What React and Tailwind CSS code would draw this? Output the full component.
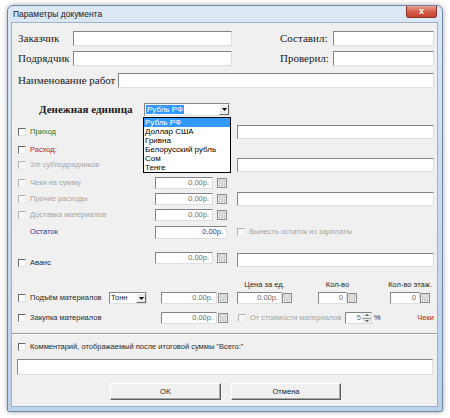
import React from "react";

const sans = "font-['Liberation_Sans',Arial,sans-serif]";
const serif = "font-['Liberation_Serif','Times_New_Roman',serif]";

function Field({ className = "", children }) {
  return (
    <div
      className={`bg-white border border-t-[#858585] border-l-[#858585] border-b-[#dedede] border-r-[#dedede] flex items-center justify-end pr-[3px] text-[7.5px] leading-none ${className}`}
    >
      {children}
    </div>
  );
}

function Calc() {
  return (
    <svg width="10" height="10" viewBox="0 0 10 10" className="shrink-0">
      <rect x="0.5" y="0.5" width="9" height="9" fill="#f2f2f2" stroke="#8c8c8c" />
      <rect x="2" y="2" width="6" height="2" fill="#ffffff" stroke="#9a9a9a" strokeWidth="0.6" />
      <path d="M2 6h1.2M4.4 6h1.2M6.8 6h1.2M2 7.8h1.2M4.4 7.8h1.2M6.8 7.8h1.2" stroke="#8c8c8c" strokeWidth="0.9" />
    </svg>
  );
}

function Check({ disabled }) {
  return disabled ? (
    <span className="block w-[8px] h-[8px] shrink-0 bg-[#f7f7f7] border border-t-[#b4b4b4] border-l-[#b4b4b4] border-b-[#ececec] border-r-[#ececec]" />
  ) : (
    <span className="block w-[8px] h-[8px] shrink-0 bg-white border border-t-[#6a6a6a] border-l-[#6a6a6a] border-b-[#e2e2e2] border-r-[#e2e2e2]" />
  );
}

function DropBtn() {
  return (
    <div className="w-[10px] h-full shrink-0 bg-[#ececec] border border-t-white border-l-white border-b-[#6a6a6a] border-r-[#6a6a6a] flex items-center justify-center">
      <svg width="5" height="3" viewBox="0 0 5 3">
        <path d="M0 0h5L2.5 3z" fill="#000" />
      </svg>
    </div>
  );
}

function Num({ w = "w-[58px]", h = "h-[12px]", gap = "gap-[4px]", text = "0,00р.", textClass = "text-[#6b6b6b]" }) {
  return (
    <div className={`flex items-center ${gap}`}>
      <Field className={`${w} ${h} ${textClass}`}>{text}</Field>
      <Calc />
    </div>
  );
}

function Left({ label, color = "text-[#2a2a2a]", disabled, w = "w-[143px]", noCheck }) {
  return (
    <div className={`${w} shrink-0 pl-[6px] flex items-center gap-[4px]`}>
      {noCheck ? <span className="block w-[8px] h-[8px]" /> : <Check disabled={disabled} />}
      <span className={`text-[7.5px] leading-none whitespace-nowrap ${color}`}>{label}</span>
    </div>
  );
}

export default function App() {
  return (
    <div className={`w-[450px] h-[418px] bg-white pt-[5px] pl-[7px] ${sans}`}>
      <div className="w-[436px] h-[407px] rounded-t-[6px] rounded-b-[2px] border border-[#6f88a8] bg-gradient-to-b from-[#dce8f6] via-[#c9dbf0] to-[#bcd1ea] flex flex-col px-[4px] pb-[5px] shadow-[0_0_5px_rgba(0,0,0,0.35)]">
        <div className="h-[17px] flex items-start justify-between">
          <span className="pl-[1px] pt-[4px] text-[8.5px] leading-none text-[#1a1a1a]">Параметры документа</span>
          <div className="mr-[1px] w-[31px] h-[12px] rounded-b-[3px] border border-[#8d3226] border-t-0 bg-gradient-to-b from-[#e9a192] via-[#d4604b] to-[#c2412c] flex items-center justify-center">
            <span className="text-white text-[9px] font-bold leading-none">x</span>
          </div>
        </div>

        <div className="relative w-[425px] h-[383px] bg-[#f0f0f0] outline outline-1 outline-[#9fb2cb] flex flex-col">
          <div className="mt-[8px] h-[15px] flex items-center pl-[6px]">
            <span className={`w-[55px] text-[11px] leading-none text-[#1a1a1a] ${serif}`}>Заказчик</span>
            <Field className="w-[159px] h-[15px]" />
            <span className={`ml-[48px] w-[53px] text-[11px] leading-none text-[#1a1a1a] ${serif}`}>Составил:</span>
            <Field className="w-[101px] h-[15px]" />
          </div>
          <div className="mt-[5px] h-[15px] flex items-center pl-[6px]">
            <span className={`w-[55px] text-[11px] leading-none text-[#1a1a1a] ${serif}`}>Подрядчик</span>
            <Field className="w-[159px] h-[15px]" />
            <span className={`ml-[48px] w-[53px] text-[11px] leading-none text-[#1a1a1a] ${serif}`}>Проверил:</span>
            <Field className="w-[101px] h-[15px]" />
          </div>
          <div className="mt-[7px] h-[15px] flex items-center pl-[6px]">
            <span className={`w-[100px] text-[11px] leading-none whitespace-nowrap text-[#1a1a1a] ${serif}`}>Наименование работ</span>
            <Field className="w-[316px] h-[15px]" />
          </div>
          <div className="mt-[15px] h-[13px] flex items-center pl-[27px]">
            <span className={`w-[105px] text-[11px] font-bold leading-none whitespace-nowrap text-[#1a1a1a] ${serif}`}>Денежная единица</span>
            <div className="w-[86px] h-[13px] bg-white border border-t-[#858585] border-l-[#858585] border-b-[#dedede] border-r-[#dedede] flex items-stretch">
              <div className="flex-1 flex items-center pl-[1px]">
                <span className="bg-[#3399ff] text-white text-[8px] leading-[9px] px-[1px]">Рубль РФ</span>
              </div>
              <DropBtn />
            </div>
          </div>

          <div className="mt-[8px] h-[16px] flex items-center">
            <Left label="Приход" color="text-[#1f7a1f]" />
            <div className="w-[72px] shrink-0" />
            <Field className="ml-[10px] w-[197px] h-[14px]" />
          </div>
          <div className="mt-[2px] h-[16px] flex items-center">
            <Left label="Расход:" color="text-[#c02424]" />
          </div>
          <div className="h-[14px] flex items-center">
            <Left label="З/п субподрядчиков" color="text-[#a6a6a6]" disabled />
            <div className="w-[72px] shrink-0" />
            <Field className="ml-[10px] w-[197px] h-[14px]" />
          </div>
          <div className="mt-[4px] h-[14px] flex items-center">
            <Left label="Чеки на сумму" color="text-[#a6a6a6]" disabled />
            <Num />
          </div>
          <div className="mt-[2px] h-[14px] flex items-center">
            <Left label="Прочие расходы" color="text-[#a6a6a6]" disabled />
            <Num />
            <Field className="ml-[10px] w-[197px] h-[14px]" />
          </div>
          <div className="mt-[2px] h-[14px] flex items-center">
            <Left label="Доставка материалов" color="text-[#a6a6a6]" disabled />
            <Num />
          </div>
          <div className="mt-[3px] h-[14px] flex items-center">
            <Left label="Остаток" color="text-[#2b3a9c]" noCheck />
            <Field className="w-[72px] h-[13px] text-[#2b3a9c]">0,00р.</Field>
            <div className="ml-[10px] flex items-center gap-[4px]">
              <Check disabled />
              <span className="text-[7.5px] leading-none text-[#a6a6a6]">Вынесть остаток из зарплаты</span>
            </div>
          </div>

          <div className="mt-[13px] h-[16px] flex items-start">
            <div className="mt-[7px]">
              <Left label="Аванс" />
            </div>
            <Num />
            <Field className="ml-[10px] mt-[1px] w-[197px] h-[14px]" />
          </div>

          <div className="mt-[11px] h-[12px] flex items-center text-[7.5px] leading-none text-[#2a2a2a]">
            <div className="ml-[225px] w-[55px] flex justify-center whitespace-nowrap">Цена за ед.</div>
            <div className="ml-[26px] w-[39px] flex justify-center whitespace-nowrap">Кол-во</div>
            <div className="ml-[33px] w-[40px] flex justify-center whitespace-nowrap">Кол-во этаж.</div>
          </div>

          <div className="mt-[1px] h-[12px] flex items-center">
            <Left label="Подъём материалов" w="w-[97px]" />
            <div className="w-[38px] h-[12px] bg-white border border-t-[#858585] border-l-[#858585] border-b-[#dedede] border-r-[#dedede] flex items-stretch">
              <span className="flex-1 text-[7.5px] leading-[10px] pl-[1px] text-[#1a1a1a]">Тонн</span>
              <DropBtn />
            </div>
            <div className="ml-[14px]">
              <Num w="w-[56px]" gap="gap-[1px]" />
            </div>
            <div className="ml-[9px]">
              <Num w="w-[45px]" gap="gap-0" />
            </div>
            <div className="ml-[26px]">
              <Num w="w-[29px]" gap="gap-0" text="0" />
            </div>
            <div className="ml-[33px]">
              <Num w="w-[30px]" gap="gap-0" text="0" />
            </div>
          </div>

          <div className="mt-[8px] h-[12px] flex items-center">
            <Left label="Закупка материалов" w="w-[149px]" />
            <Num w="w-[56px]" gap="gap-[1px]" />
            <div className="ml-[10px] w-[107px] flex items-center gap-[4px]">
              <Check disabled />
              <span className="text-[7.5px] leading-none whitespace-nowrap text-[#a6a6a6]">От стоимости материалов</span>
            </div>
            <div className="w-[27px] h-[12px] bg-white border border-t-[#858585] border-l-[#858585] border-b-[#dedede] border-r-[#dedede] flex items-stretch">
              <span className="flex-1 text-[7.5px] leading-[10px] text-right pr-[1px] text-[#6b6b6b]">5</span>
              <div className="w-[9px] flex flex-col">
                <div className="flex-1 bg-[#ececec] border-b border-[#9a9a9a] flex items-center justify-center">
                  <svg width="4" height="2" viewBox="0 0 4 2"><path d="M0 2h4L2 0z" fill="#555" /></svg>
                </div>
                <div className="flex-1 bg-[#ececec] flex items-center justify-center">
                  <svg width="4" height="2" viewBox="0 0 4 2"><path d="M0 0h4L2 2z" fill="#555" /></svg>
                </div>
              </div>
            </div>
            <span className="ml-[2px] text-[7.5px] leading-none text-[#2a2a2a]">%</span>
            <span className="ml-auto mr-[3px] text-[7.5px] leading-none text-[#b52222]">Чеки</span>
          </div>

          <div className="mt-[9px] h-[2px] border-t border-b border-t-[#a0a0a0] border-b-white" />

          <div className="mt-[6px] h-[12px] flex items-center">
            <Left label={"Комментарий, отображаемый после итоговой суммы \"Всего:\""} w="w-[300px]" />
          </div>
          <Field className="mt-[6px] ml-[5px] w-[416px] h-[16px]" />

          <div className="mt-[8px] flex gap-[10px] ml-[98px]">
            <div className="w-[111px] h-[17px] bg-[#f0f0f0] border border-t-white border-l-white border-b-[#5f5f5f] border-r-[#5f5f5f] shadow-[inset_-1px_-1px_0_#a8a8a8] flex items-center justify-center text-[7.5px] leading-none text-[#1a1a1a]">OK</div>
            <div className="w-[110px] h-[17px] bg-[#f0f0f0] border border-t-white border-l-white border-b-[#5f5f5f] border-r-[#5f5f5f] shadow-[inset_-1px_-1px_0_#a8a8a8] flex items-center justify-center text-[7.5px] leading-none text-[#1a1a1a]">Отмена</div>
          </div>

          <div className="absolute left-[131px] top-[94px] w-[88px] bg-white border border-black flex flex-col text-[8px] text-black">
            <div className="h-[9px] leading-[9px] pl-[1px] bg-[#3399ff] text-white">Рубль РФ</div>
            <div className="h-[9px] leading-[9px] pl-[1px]">Доллар США</div>
            <div className="h-[9px] leading-[9px] pl-[1px]">Гривна</div>
            <div className="h-[9px] leading-[9px] pl-[1px]">Белорусский рубль</div>
            <div className="h-[9px] leading-[9px] pl-[1px]">Сом</div>
            <div className="h-[9px] leading-[9px] pl-[1px]">Тенге</div>
          </div>
        </div>
      </div>
    </div>
  );
}
